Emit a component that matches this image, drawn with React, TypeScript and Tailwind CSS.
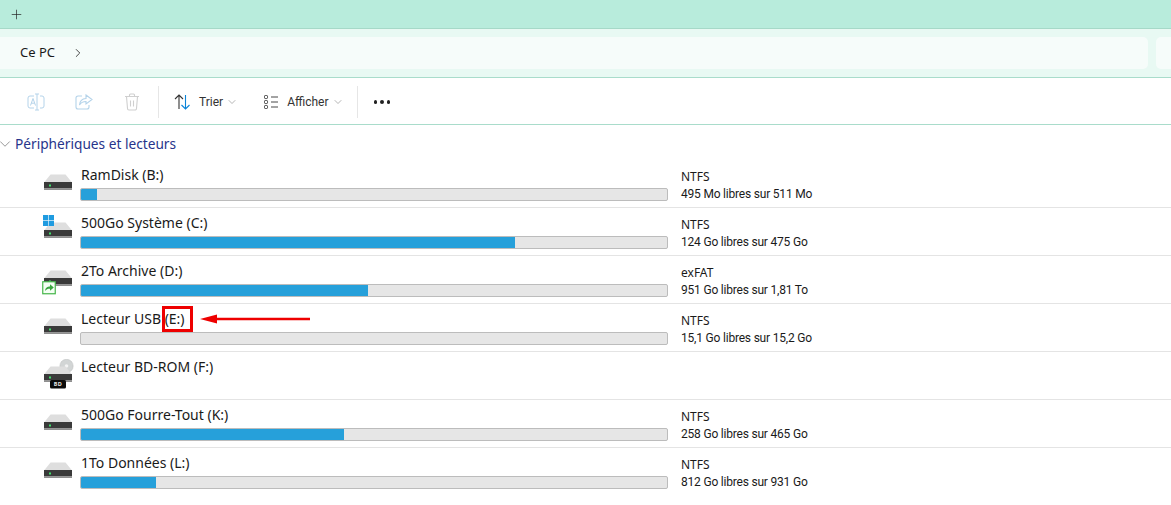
import { ChevronDown, ChevronRight, Plus } from 'lucide-react';

interface Drive {
  name: string;
  fs?: string;
  free?: string;
  used?: number;
  badge?: 'windows' | 'share' | 'disc';
}

const drives: Drive[] = [
  { name: 'RamDisk (B:)', fs: 'NTFS', free: '495 Mo libres sur 511 Mo', used: 16 },
  { name: '500Go Système (C:)', fs: 'NTFS', free: '124 Go libres sur 475 Go', used: 434, badge: 'windows' },
  { name: '2To Archive (D:)', fs: 'exFAT', free: '951 Go libres sur 1,81 To', used: 287, badge: 'share' },
  { name: 'Lecteur USB (E:)', fs: 'NTFS', free: '15,1 Go libres sur 15,2 Go', used: 0 },
  { name: 'Lecteur BD-ROM (F:)', badge: 'disc' },
  { name: '500Go Fourre-Tout (K:)', fs: 'NTFS', free: '258 Go libres sur 465 Go', used: 263 },
  { name: '1To Données (L:)', fs: 'NTFS', free: '812 Go libres sur 931 Go', used: 75 },
];

function DriveIcon({ badge }: { badge?: Drive['badge'] }) {
  return (
    <svg width="32" height="32" viewBox="0 0 32 32" className="shrink-0">
      {badge === 'disc' && (
        <g>
          <circle cx="24.5" cy="7" r="6.7" fill="#d2d5d5" stroke="#bcbfbf" strokeWidth="0.5" />
          <circle cx="24.5" cy="7" r="1.8" fill="#f4f4f4" />
        </g>
      )}
      <path d="M2 15.5 L8.5 7.5 H23.5 L30 15.5 Z" fill="#dedede" />
      <rect x="2" y="15" width="28" height="6.5" fill="#3a3a3a" />
      <rect x="2" y="21.5" width="28" height="1.5" fill="#8f8f8f" />
      <rect x="7" y="17.5" width="2" height="2" fill="#3ee06a" />
      {badge === 'windows' && (
        <g fill="#1f9be0">
          <rect x="1" y="0" width="5.2" height="5.2" />
          <rect x="6.8" y="0" width="5.2" height="5.2" />
          <rect x="1" y="5.8" width="5.2" height="5.2" />
          <rect x="6.8" y="5.8" width="5.2" height="5.2" />
        </g>
      )}
      {badge === 'share' && (
        <g>
          <rect x="0.75" y="18.75" width="12.5" height="12" fill="#f4fff4" stroke="#45b649" strokeWidth="1.2" />
          <path d="M3 28 C3.5 24.5 5.5 23.5 8 23.5 V21.3 L11.8 24.6 L8 27.8 V25.8 C6 25.7 4.5 26.3 3 28 Z" fill="#3aa63f" />
        </g>
      )}
      {badge === 'disc' && (
        <g>
          <rect x="8" y="21" width="16" height="8.5" rx="1.5" fill="#0b0b0b" />
          <text x="16" y="27.2" textAnchor="middle" fontSize="5.5" fontWeight="700" fill="#e6e6e6" letterSpacing="0.4">BD</text>
        </g>
      )}
    </svg>
  );
}

function DriveRow({ drive }: { drive: Drive }) {
  const isUsb = drive.name.startsWith('Lecteur USB');
  return (
    <div className="relative flex h-[48px] items-start border-b border-[#e4e4e4] pl-[42px] last:border-b-0">
      <div className="mt-[7px] w-[38px]">
        <DriveIcon badge={drive.badge} />
      </div>
      <div className="w-[601px]">
        <div className="mt-[5px] h-[20px] pl-px text-[14px] leading-[20px] text-[#1a1a1a]">{drive.name}</div>
        {drive.fs && (
          <div className="mt-[3px] h-[13px] w-[588px] overflow-hidden rounded-[2px] border border-[#bcbcbc] bg-[#e6e6e6]">
            <div className="h-full bg-[#26a0da]" style={{ width: drive.used }} />
          </div>
        )}
      </div>
      {drive.fs && (
        <div className="mt-[8px] text-[12px] leading-[17px] text-[#1a1a1a]">
          <div>{drive.fs}</div>
          <div className="mt-px font-['Roboto',sans-serif] tracking-[-0.2px]">{drive.free}</div>
        </div>
      )}
      {isUsb && (
        <>
          <div className="absolute left-[162px] top-[2px] h-[26px] w-[31px] border-[3px] border-[#ee0000]" />
          <svg className="absolute left-[200px] top-[8px]" width="112" height="14" viewBox="0 0 112 14">
            <path d="M0 7 L17 2.5 V5.8 H110 V8.2 H17 V11.5 Z" fill="#ee0000" />
          </svg>
        </>
      )}
    </div>
  );
}

export default function App() {
  return (
    <div className="h-[505px] w-[1171px] overflow-hidden bg-white font-['Noto_Sans',sans-serif]">
      <div className="flex h-[29px] items-center border-b border-[#a6d9c8] bg-[#b8ecdc] pl-[9px]">
        <Plus size={15} strokeWidth={1.1} className="text-[#222]" />
      </div>

      <div className="flex h-[49px] items-center gap-[8px] border-b border-[#a9dccb] bg-[#e8f9f3]">
        <div className="flex h-[32px] w-[1148px] items-center rounded-r-[5px] bg-[#f6fcfa] pl-[20px]">
          <span className="text-[13px] text-[#1a1a1a]">Ce PC</span>
          <ChevronRight size={14} strokeWidth={1.4} className="ml-[16px] text-[#222]" />
        </div>
        <div className="h-[32px] flex-1 rounded-l-[5px] bg-[#f6fcfa]" />
      </div>

      <div className="flex h-[47px] items-center border-b border-[#a9dccb] pl-[27px] pt-[2px]">
        <svg width="18" height="18" viewBox="0 0 18 18" fill="none" stroke="#b4d3ea" strokeWidth="1">
          <path d="M7 3H3a2 2 0 0 0-2 2v8a2 2 0 0 0 2 2h4M13 3h2a2 2 0 0 1 2 2v8a2 2 0 0 1-2 2h-2" />
          <path d="M8 1h4M8 17h4M10 1v16" />
          <path d="M3.5 12.5 6 5.5l2.5 7M4.4 10.2h3.2" />
        </svg>
        <svg className="ml-[30px]" width="18" height="18" viewBox="0 0 18 18" fill="none" stroke="#b4d3ea" strokeWidth="1.1">
          <path d="M7 3H3a2 2 0 0 0-2 2v9a2 2 0 0 0 2 2h9a2 2 0 0 0 2-2v-2" />
          <path d="M11 2l6 4.5-6 4.5V8.5c-3 0-5 1-6.5 3.5.3-4 2.5-6.3 6.5-6.5z" />
        </svg>
        <svg className="ml-[31px]" width="16" height="18" viewBox="0 0 16 18" fill="none" stroke="#cfcfcf" strokeWidth="1.1">
          <path d="M1 3.5h14M5.5 3.5V2a1 1 0 0 1 1-1h3a1 1 0 0 1 1 1v1.5" />
          <path d="M2.5 3.5l1 12a1.5 1.5 0 0 0 1.5 1.5h6a1.5 1.5 0 0 0 1.5-1.5l1-12" />
          <path d="M6.5 7.5v6M9.5 7.5v6" />
        </svg>
        <div className="ml-[18px] h-[32px] w-px bg-[#e6e6e6]" />
        <svg className="ml-[15px]" width="17" height="16" viewBox="0 0 17 16" fill="none" strokeWidth="1.1">
          <path d="M5 15V1M1 5l4-4 4 4" stroke="#333" />
          <path d="M11.5 1v14M7.5 11l4 4 4-4" stroke="#0a84d8" />
        </svg>
        <span className="ml-[8px] font-['Roboto',sans-serif] text-[12px] text-[#333]">Trier</span>
        <ChevronDown size={12} strokeWidth={1.1} className="ml-[3px] text-[#777]" />
        <svg className="ml-[26px]" width="15" height="14" viewBox="0 0 15 14" fill="none" stroke="#333" strokeWidth="0.9">
          <rect x="0.5" y="0.5" width="3" height="3" rx="0.8" />
          <rect x="0.5" y="5.5" width="3" height="3" rx="0.8" />
          <rect x="0.5" y="10.5" width="3" height="3" rx="0.8" />
          <path d="M7 2h7M7 7h7M7 12h7" />
        </svg>
        <span className="ml-[8px] font-['Roboto',sans-serif] text-[12px] text-[#333]">Afficher</span>
        <ChevronDown size={12} strokeWidth={1.1} className="ml-[3px] text-[#777]" />
        <div className="ml-[13px] h-[32px] w-px bg-[#e6e6e6]" />
        <div className="ml-[16px] flex gap-[3px]">
          <span className="h-[3.5px] w-[3.5px] rounded-full bg-[#222]" />
          <span className="h-[3.5px] w-[3.5px] rounded-full bg-[#222]" />
          <span className="h-[3.5px] w-[3.5px] rounded-full bg-[#222]" />
        </div>
      </div>

      <div className="flex h-[35px] items-center pt-[3px]">
        <ChevronDown size={18} strokeWidth={0.9} className="-ml-[4px] text-[#666]" />
        <span className="ml-px text-[13.7px] text-[#27348b]">Périphériques et lecteurs</span>
      </div>

      {drives.map((drive) => (
        <DriveRow key={drive.name} drive={drive} />
      ))}
    </div>
  );
}
